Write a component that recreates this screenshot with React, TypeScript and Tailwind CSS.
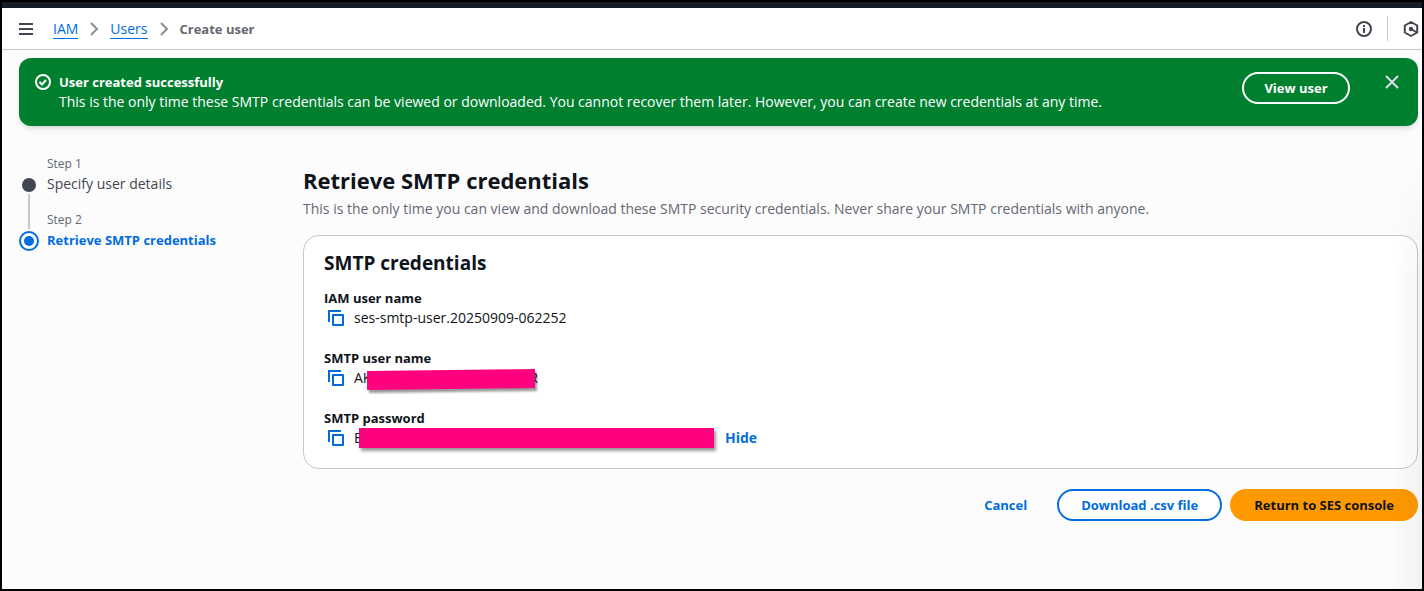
import { useState } from "react";

const CREDENTIALS = [
  { id: "iam-user", label: "IAM user name", value: "ses-smtp-user.20250909-062252" },
  { id: "smtp-user", label: "SMTP user name", value: null },
  { id: "smtp-password", label: "SMTP password", value: null },
];

function MenuIcon() {
  return (
    <svg width="16" height="16" viewBox="0 0 16 16" fill="none" stroke="#424650" strokeWidth="2" aria-hidden="true">
      <path d="M1 3h14M1 8h14M1 13h14" />
    </svg>
  );
}

function ChevronIcon() {
  return (
    <svg width="16" height="16" viewBox="0 0 16 16" fill="none" stroke="#8c8c94" strokeWidth="2" aria-hidden="true">
      <path d="M5 2l6 6-6 6" />
    </svg>
  );
}

function InfoIcon() {
  return (
    <svg width="16" height="16" viewBox="0 0 16 16" fill="none" stroke="#424650" strokeWidth="2" aria-hidden="true">
      <circle cx="8" cy="8" r="7" />
      <path d="M8 4v2M8 7v5" />
    </svg>
  );
}

function HexagonIcon() {
  return (
    <svg width="16" height="16" viewBox="0 0 16 16" fill="none" stroke="#424650" strokeWidth="2" aria-hidden="true">
      <path d="M8 1l6.200 3.500v7L8 15l-6.200-3.500v-7z" strokeLinejoin="round" />
      <circle cx="8" cy="8" r="2.200" fill="#424650" stroke="none" />
      <path d="M8 8l6 3.500" />
    </svg>
  );
}

function CopyIcon() {
  return (
    <svg width="16" height="16" viewBox="0 0 16 16" fill="none" stroke="#006ce0" strokeWidth="2" aria-hidden="true">
      <path d="M1 12V1h12" />
      <path d="M5 5h10v10H5z" strokeLinejoin="round" />
    </svg>
  );
}

function TopBar() {
  return (
    <header className="border-t-6 border-b border-t-[#161d26] border-b-[#c6c6cd] bg-white">
      <div className="flex h-[41px] items-center pl-4">
        <button type="button" aria-label="Open navigation">
          <MenuIcon />
        </button>
        <nav aria-label="Breadcrumbs" className="ml-[19px] flex-1">
          <ol className="flex items-center gap-2 text-sm leading-5">
            <li>
              <a href="#iam" className="block border-b border-[#006ce0] pt-px leading-[18px] text-[#006ce0]">IAM</a>
            </li>
            <li><ChevronIcon /></li>
            <li>
              <a href="#users" className="block border-b border-[#006ce0] pt-px leading-[18px] text-[#006ce0]">Users</a>
            </li>
            <li><ChevronIcon /></li>
            <li className="text-[13px] font-bold text-[#656871]" aria-current="page">Create user</li>
          </ol>
        </nav>
        <button type="button" aria-label="Info" className="mr-[15px]">
          <InfoIcon />
        </button>
        <div className="h-[25px] w-px bg-[#c6c6cd]" />
        <button type="button" aria-label="Assistant" className="ml-[15px] w-[19px] overflow-hidden">
          <HexagonIcon />
        </button>
      </div>
    </header>
  );
}

function SuccessBanner({ onDismiss }: { onDismiss: () => void }) {
  return (
    <section
      role="status"
      className="flex items-start rounded-xl bg-[#00802f] py-[14px] pr-[18px] pl-4 text-sm leading-5 text-white shadow-md"
    >
      <svg className="mt-[2px] mr-2 shrink-0" width="16" height="16" viewBox="0 0 16 16" fill="none" stroke="#fff" strokeWidth="2" aria-hidden="true">
        <circle cx="8" cy="8" r="7" />
        <path d="M4.500 8l2.500 2.500 4-4.500" />
      </svg>
      <div className="min-w-0 flex-1">
        <h2 className="text-[13px] leading-5 font-bold">User created successfully</h2>
        <p>
          This is the only time these SMTP credentials can be viewed or downloaded. You cannot recover them later. However, you can create new credentials at any time.
        </p>
      </div>
      <button type="button" className="h-8 w-[108px] shrink-0 rounded-full border-2 border-white text-[13px] leading-5 font-bold">
        View user
      </button>
      <button type="button" aria-label="Dismiss" onClick={onDismiss} className="mt-[2px] ml-[34px]">
        <svg width="16" height="16" viewBox="0 0 16 16" fill="none" stroke="#dedee3" strokeWidth="2" aria-hidden="true">
          <path d="M2 2l12 12M14 2L2 14" />
        </svg>
      </button>
    </section>
  );
}

function Steps() {
  return (
    <nav aria-label="Steps" className="w-[284px] shrink-0 pt-[3px]">
      <ol>
        <li className="flex gap-2">
          <div className="flex w-5 flex-col items-center pt-[22px]">
            <div className="size-[14px] rounded-full bg-[#424650]" />
            <div className="mt-[2px] w-[2px] flex-1 bg-[#c6c6cd]" />
          </div>
          <div className="h-14">
            <p className="text-xs leading-4 text-[#656871]">Step 1</p>
            <p className="mt-[2px] text-sm leading-5 text-[#424650]">Specify user details</p>
          </div>
        </li>
        <li className="flex gap-2">
          <div className="flex w-5 flex-col items-center">
            <div className="h-[17px] w-[2px] bg-[#c6c6cd]" />
            <div className="mt-[2px] flex size-5 items-center justify-center rounded-full border-2 border-[#006ce0]">
              <div className="size-[10px] rounded-full bg-[#006ce0]" />
            </div>
          </div>
          <div>
            <p className="text-xs leading-4 text-[#656871]">Step 2</p>
            <p className="mt-[2px] text-[13px] leading-5 font-bold text-[#006ce0]" aria-current="step">
              Retrieve SMTP credentials
            </p>
          </div>
        </li>
      </ol>
    </nav>
  );
}

// Markers drawn over the secret values; only their first or last letters show.
function MaskedUserName() {
  return (
    <span className="relative flex w-[184px] justify-between">
      <span>AK</span>
      <span>R</span>
      <svg
        className="absolute top-0 left-[13px] drop-shadow-[2px_3px_1px_rgba(0,0,0,0.4)]"
        width="168"
        height="22"
        viewBox="0 0 168 22"
        aria-hidden="true"
      >
        <path d="M0 3L168 1V20L0 22z" fill="#ff007f" />
      </svg>
    </span>
  );
}

function MaskedPassword() {
  return (
    <span className="relative block w-[360px]">
      E
      <span className="absolute top-0 left-[5px] h-5 w-[355px] bg-[#ff007f] shadow-[2px_3px_3px_rgba(0,0,0,0.4)]" />
    </span>
  );
}

function CredentialsCard() {
  const [hidden, setHidden] = useState(false);

  return (
    <section className="rounded-2xl border border-[#c6c6cd] bg-white px-5 pt-[15px] pb-5">
      <h2 className="text-[19px] leading-6 font-bold">SMTP credentials</h2>
      <dl className="mt-[13px] flex flex-col gap-5 text-sm leading-5">
        {CREDENTIALS.map((c) => (
          <div key={c.id}>
            <dt className="text-[13px] leading-5 font-bold">{c.label}</dt>
            <dd className="flex items-center pl-1">
              <button type="button" aria-label={`Copy ${c.label}`} className="mr-[10px]">
                <CopyIcon />
              </button>
              {c.value}
              {c.id === "smtp-user" && <MaskedUserName />}
              {c.id === "smtp-password" && (
                <>
                  {hidden ? <span className="w-[360px]">••••••••</span> : <MaskedPassword />}
                  <button
                    type="button"
                    onClick={() => setHidden(!hidden)}
                    className="ml-[11px] font-bold text-[#006ce0]"
                  >
                    {hidden ? "Show" : "Hide"}
                  </button>
                </>
              )}
            </dd>
          </div>
        ))}
      </dl>
    </section>
  );
}

export default function App() {
  const [showBanner, setShowBanner] = useState(true);

  return (
    <div className="relative min-h-screen border-2 border-black bg-[#fcfcfd] font-['Open_Sans','Noto_Sans',sans-serif] text-[#0f141a]">
      <TopBar />
      <div className="pt-2 pr-1 pl-[17px]">
        {showBanner && <SuccessBanner onDismiss={() => setShowBanner(false)} />}
        <div className="flex pt-[27px]">
          <Steps />
          <main className="min-w-0 flex-1 pt-3">
            <h1 className="text-[22px] leading-[30px] font-bold">Retrieve SMTP credentials</h1>
            <p className="mt-1 mb-4 text-sm leading-5 text-[#656871]">
              This is the only time you can view and download these SMTP security credentials. Never share your SMTP credentials with anyone.
            </p>
            <CredentialsCard />
            <div className="mt-5 flex justify-end gap-2 text-[13px] leading-5 font-bold">
              <button type="button" className="h-8 px-[22px] text-[#006ce0]">Cancel</button>
              <button type="button" className="h-8 rounded-full border-2 border-[#006ce0] bg-white px-[22px] text-[#006ce0]">
                Download .csv file
              </button>
              <button type="button" className="h-8 rounded-full bg-[#ff9900] px-6">Return to SES console</button>
            </div>
          </main>
        </div>
      </div>
      <div className="pointer-events-none absolute top-40 right-0 bottom-0 w-8 bg-linear-to-l from-black/4 to-transparent [mask-image:linear-gradient(to_bottom,transparent,black_120px)]" />
    </div>
  );
}
